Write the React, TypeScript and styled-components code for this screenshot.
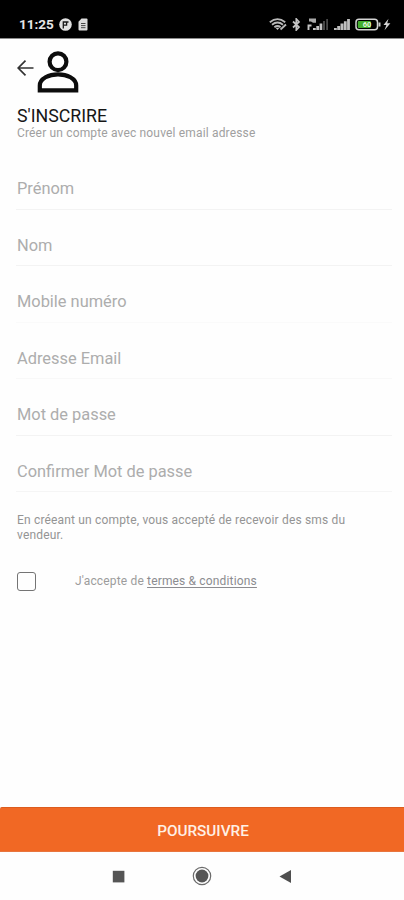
import React from "react";
import styled, { createGlobalStyle } from "styled-components";

const GlobalStyle = createGlobalStyle`
  * { box-sizing: border-box; }
  body { margin: 0; background: #fefefe; font-family: Roboto, "Liberation Sans", sans-serif; }
`;

const Screen = styled.div`
  width: 404px;
  height: 900px;
  display: flex;
  flex-direction: column;
  overflow: hidden;
  background: #fefefe;
`;

const StatusBar = styled.header`
  height: 39px;
  flex: none;
  display: flex;
  justify-content: space-between;
  align-items: flex-start;
  padding: 17px 13px 0 19px;
  background: #000;
  border-bottom: 1px solid #8c8c8c;
`;

const StatusGroup = styled.div<{ $gap: number }>`
  display: flex;
  align-items: center;
  gap: ${(p) => p.$gap}px;
  height: 15px;
`;

const Clock = styled.span`
  width: 35px;
  font-size: 13.5px;
  font-weight: 700;
  line-height: 15px;
  color: #e6e6e6;
  white-space: nowrap;
`;

const Icon = styled.svg`
  display: block;
  flex: none;
`;

const Content = styled.main`
  flex: 1;
  padding: 10px 12px 0 17px;
`;

const TopRow = styled.div`
  display: flex;
  align-items: flex-start;
  height: 56px;
`;

const BackButton = styled.button`
  width: 20px;
  height: 38px;
  padding: 0;
  border: 0;
  background: none;
  display: flex;
  align-items: center;
`;

const Title = styled.h1`
  margin: 0;
  height: 21px;
  font-size: 17.8px;
  line-height: 22px;
  font-weight: 400;
  color: #161616;
  white-space: nowrap;
`;

const Subtitle = styled.p`
  margin: 0;
  height: 27px;
  font-size: 12px;
  line-height: 15px;
  letter-spacing: 0.16px;
  color: #a0a0a0;
  white-space: nowrap;
`;

const Field = styled.label<{ $line: string }>`
  display: block;
  height: 56.5px;
  margin-left: -1px;
  padding: 26px 0 0 1px;
  border-bottom: 1px solid ${(p) => p.$line};
  font-size: 16.4px;
  line-height: 20px;
  color: #adadad;
`;

const Notice = styled.p`
  margin: 21px 0 0;
  font-size: 12px;
  line-height: 15px;
  letter-spacing: 0.17px;
  color: #949494;
`;

const ConsentRow = styled.div`
  display: flex;
  align-items: center;
  height: 20px;
  margin-top: 28px;
  gap: 39px;
`;

const Checkbox = styled.span`
  width: 19px;
  height: 19px;
  border: 1.6px solid #747474;
  border-radius: 3px;
`;

const ConsentText = styled.span`
  font-size: 12px;
  line-height: 15px;
  letter-spacing: 0.16px;
  color: #9c9c9c;
  white-space: nowrap;
`;

const TermsLink = styled.span`
  color: #8c8c90;
  text-decoration: underline;
  text-underline-offset: 2px;
`;

const SubmitButton = styled.button`
  flex: none;
  height: 45px;
  padding: 2px 0 0 2px;
  border: 0;
  border-top: 1px solid #dc5c1e;
  border-bottom: 1px solid #e8753e;
  border-top-left-radius: 2px;
  background: #f16824;
  color: #fff0e4;
  font: 500 15.3px/20px Roboto, sans-serif;
`;

const NavBar = styled.nav`
  flex: none;
  height: 48px;
  padding-left: 112px;
  display: flex;
  align-items: center;
  gap: 67px;
`;

const fields = [
  { label: "Prénom", line: "#f3f3f3" },
  { label: "Nom", line: "#f3f3f3" },
  { label: "Mobile numéro", line: "#fafafa" },
  { label: "Adresse Email", line: "#f8f8f8" },
  { label: "Mot de passe", line: "#f3f3f3" },
  { label: "Confirmer Mot de passe", line: "#f5f5f5" },
];

export default function App() {
  return (
    <>
      <GlobalStyle />
      <Screen>
        <StatusBar>
          <StatusGroup $gap={5}>
            <Clock>11:25</Clock>
            <Icon width="13" height="13" viewBox="0 0 13 13">
              <circle cx="6.5" cy="6.5" r="6.3" fill="#e0e0e0" />
              <path d="M4.3 10.5V4H9.5M4.3 7.2H7.6V4" fill="none" stroke="#161616" strokeWidth="1.3" />
            </Icon>
            <Icon width="12" height="13" viewBox="0 0 12 13">
              <path d="M4.5 0.5H9.5Q10.5 0.5 10.5 1.5V11.5Q10.5 12.5 9.5 12.5H2.5Q1.5 12.5 1.5 11.5V3.8Z" fill="#dedede" />
              <path d="M4 5.5H8.5M4 7.6H8.5M4 9.7H8.5" stroke="#4b4b4b" strokeWidth="1" />
            </Icon>
          </StatusGroup>
          <StatusGroup $gap={5}>
            <Icon width="18" height="13" viewBox="0 0 18 13">
              <g fill="none" stroke="#b9b9b9" strokeWidth="1.8">
                <path d="M0.8 4.2Q8.5 -2 16.2 4.2M3 6.8Q8.5 2.3 14 6.8M5.4 9.2Q8.5 6.7 11.6 9.2" />
                <path d="M11.5 11.5L17 6.5" strokeWidth="1.8" />
              </g>
              <path d="M6.5 9.7H10.5L8.5 12Z" fill="#c6c6c6" />
            </Icon>
            <Icon width="10" height="13" viewBox="0 0 10 13">
              <path d="M1 3.5L7 9L4.3 12V1L7 4L1 9.5" fill="none" stroke="#c4c4c4" strokeWidth="1.7" />
            </Icon>
            <Icon width="22" height="13" viewBox="0 0 22 13">
              <path d="M2 0.5H9V4.8H6L4 3.5H2Z" fill="#aaa" />
              <path d="M1.5 12V7.5H4.5" fill="none" stroke="#c4c4c4" strokeWidth="1.9" />
              <path d="M6 10H8.8V12H6ZM9.3 8H12V12H9.3ZM12.6 5.5H15.3V12H12.6Z" fill="#c4c4c4" />
              <path d="M16 3H18V12H16ZM19.2 1H21V12H19.2Z" fill="#484848" />
            </Icon>
            <Icon width="16" height="13" viewBox="0 0 16 13">
              <path d="M0 10H2.8V12H0ZM3.2 8H6.1V12H3.2ZM6.5 5.5H9.5V12H6.5ZM9.9 3.3H12.7V12H9.9ZM13.1 1H15.9V12H13.1Z" fill="#bebebe" />
            </Icon>
            <Icon width="36" height="13" viewBox="0 0 36 13">
              <rect x="1" y="1.2" width="21.5" height="10.6" rx="3" fill="none" stroke="#d4d4d4" strokeWidth="1.5" />
              <rect x="2.8" y="3" width="13" height="7" rx="1" fill="#43ae2f" />
              <path d="M24.5 4.5V8.5" stroke="#ccc" strokeWidth="2" />
              <text x="12" y="9.4" textAnchor="middle" fontFamily="Roboto" fontSize="7.5" fontWeight="700" fill="#e5f6dc">60</text>
              <path d="M33.5 0.8L28.5 7H31.4L29.5 12.3L35.4 5.2H32.2Z" fill="#d5d5d5" />
            </Icon>
          </StatusGroup>
        </StatusBar>

        <Content>
          <TopRow>
            <BackButton aria-label="Retour">
              <Icon width="17" height="18" viewBox="0 0 17 18">
                <path d="M16.5 9H1.5M8.5 1.7L1.2 9L8.5 16.3" fill="none" stroke="#333" strokeWidth="1.7" />
              </Icon>
            </BackButton>
            <Icon width="42" height="44" viewBox="0 0 42 44">
              <g fill="none" stroke="#0c0c0c" strokeWidth="4.2">
                <circle cx="21" cy="12.7" r="8.4" />
                <path d="M2.8 41.3V36.5C2.8 29.5 12 25.3 21 25.3S39.2 29.5 39.2 36.5V41.3Z" />
              </g>
            </Icon>
          </TopRow>
          <Title>S'INSCRIRE</Title>
          <Subtitle>Créer un compte avec nouvel email adresse</Subtitle>
          {fields.map((f) => (
            <Field key={f.label} $line={f.line}>{f.label}</Field>
          ))}
          <Notice>
            En créeant un compte, vous accepté de recevoir des sms du
            <br />
            vendeur.
          </Notice>
          <ConsentRow>
            <Checkbox role="checkbox" aria-checked="false" />
            <ConsentText>
              J'accepte de <TermsLink>termes &amp; conditions</TermsLink>
            </ConsentText>
          </ConsentRow>
        </Content>

        <SubmitButton>POURSUIVRE</SubmitButton>
        <NavBar>
          <Icon width="13" height="13" viewBox="0 0 13 13">
            <rect x="0.8" y="0.8" width="11.6" height="11.6" fill="#555" />
          </Icon>
          <Icon width="20" height="20" viewBox="0 0 20 20">
            <circle cx="10" cy="10" r="8.7" fill="none" stroke="#6b6b6b" strokeWidth="1.2" />
            <circle cx="10" cy="10" r="6.4" fill="#555" />
          </Icon>
          <Icon width="13" height="15" viewBox="0 0 13 15">
            <path d="M12 1V14L0.5 7.5Z" fill="#4f4f4f" />
          </Icon>
        </NavBar>
      </Screen>
    </>
  );
}
